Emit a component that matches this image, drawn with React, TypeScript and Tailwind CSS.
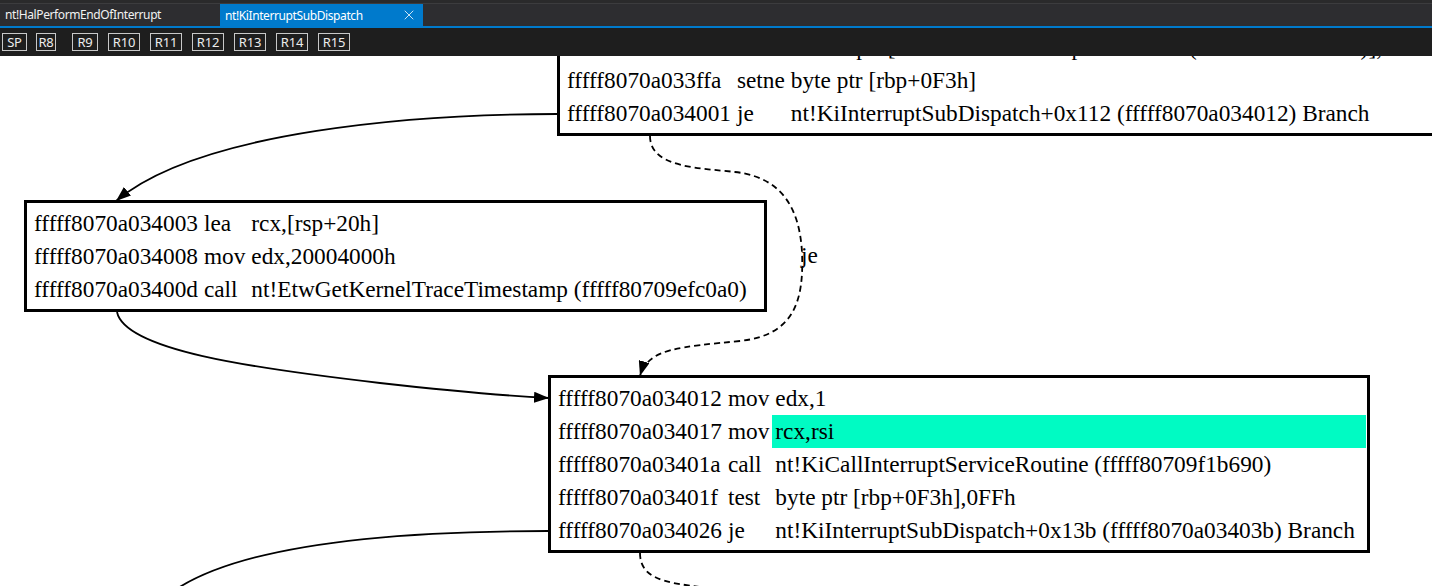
import { X } from "lucide-react";

type Row = { addr: string; op: string; args: string; hl?: boolean };

const regs = [
  { name: "SP", cls: "ml-[2px] w-[25px]" },
  { name: "R8", cls: "ml-[9px] w-[20px]" },
  { name: "R9", cls: "ml-[16px] w-[26px]" },
  { name: "R10", cls: "ml-[10px] w-[32px]" },
  { name: "R11", cls: "ml-[10px] w-[32px]" },
  { name: "R12", cls: "ml-[10px] w-[32px]" },
  { name: "R13", cls: "ml-[10px] w-[32px]" },
  { name: "R14", cls: "ml-[10px] w-[32px]" },
  { name: "R15", cls: "ml-[10px] w-[32px]" },
];

const block1: Row[] = [
  { addr: "fffff8070a033ff0", op: "test", args: "dword ptr [nt!PerfGlobalGroupMask+0x8 (fffff8070a8b5008)],40h" },
  { addr: "fffff8070a033ffa", op: "setne", args: "byte ptr [rbp+0F3h]" },
  { addr: "fffff8070a034001", op: "je", args: "nt!KiInterruptSubDispatch+0x112 (fffff8070a034012) Branch" },
];

const block2: Row[] = [
  { addr: "fffff8070a034003", op: "lea", args: "rcx,[rsp+20h]" },
  { addr: "fffff8070a034008", op: "mov", args: "edx,20004000h" },
  { addr: "fffff8070a03400d", op: "call", args: "nt!EtwGetKernelTraceTimestamp (fffff80709efc0a0)" },
];

const block3: Row[] = [
  { addr: "fffff8070a034012", op: "mov", args: "edx,1" },
  { addr: "fffff8070a034017", op: "mov", args: "rcx,rsi", hl: true },
  { addr: "fffff8070a03401a", op: "call", args: "nt!KiCallInterruptServiceRoutine (fffff80709f1b690)" },
  { addr: "fffff8070a03401f", op: "test", args: "byte ptr [rbp+0F3h],0FFh" },
  { addr: "fffff8070a034026", op: "je", args: "nt!KiInterruptSubDispatch+0x13b (fffff8070a03403b) Branch" },
];

function Block({ rows, className }: { rows: Row[]; className: string }) {
  return (
    <div className={`absolute border-[3px] border-black bg-white pt-[4px] pb-[3px] pl-[4px] pr-[1px] ${className}`}>
      <div className="grid grid-cols-[auto_auto_1fr] text-[23.3px] leading-[33px] text-black whitespace-nowrap">
        {rows.map((r) => (
          <div key={r.addr} className="contents">
            <div className="h-[33px] px-[3px]">{r.addr}</div>
            <div className="h-[33px] px-[3px]">{r.op}</div>
            <div className={`h-[33px] px-[3px] ${r.hl ? "bg-[#00fbc3]" : ""}`}>{r.args}</div>
          </div>
        ))}
      </div>
    </div>
  );
}

export default function App() {
  return (
    <div className="w-[1432px] h-[586px] overflow-hidden bg-white">
      {/* tab strip */}
      <div className="h-[4px] bg-[#2a2a2b] border-b border-[#3c3c3e]" />
      <div className="flex h-[22px] bg-[#2d2d30] text-[12px] tracking-[-0.4px] font-['Noto_Sans',sans-serif]">
        <div className="w-[220px] pl-[5px] leading-[21px] text-[#f1f1f1]">nt!HalPerformEndOfInterrupt</div>
        <div className="flex w-[203px] items-center justify-between bg-[#007acc] pl-[5px] pr-[6px] text-white">
          <span className="leading-[21px]">nt!KiInterruptSubDispatch</span>
          <X className="h-[16px] w-[16px]" strokeWidth={1.2} />
        </div>
      </div>
      <div className="h-[2px] bg-[#007acc]" />

      {/* register bar */}
      <div className="flex h-[28px] items-center bg-[#1e1e1e] font-['Noto_Sans',sans-serif] text-[13px] tracking-[-0.2px] text-[#ececec]">
        {regs.map((r) => (
          <div
            key={r.name}
            className={`flex h-[18px] items-center justify-center border border-[#c8c8c8] leading-none ${r.cls}`}
          >
            {r.name}
          </div>
        ))}
      </div>

      {/* graph canvas */}
      <div className="relative h-[530px] overflow-hidden bg-white font-['Liberation_Serif',serif]">
        <Block rows={block1} className="left-[557px] top-[-32px] w-[900px]" />
        <Block rows={block2} className="left-[24px] top-[144px] w-[743px]" />
        <Block rows={block3} className="left-[548px] top-[319px] w-[822px]" />

        <svg
          className="pointer-events-none absolute left-0 top-0"
          width="1432"
          height="530"
          viewBox="0 56 1432 530"
        >
          <defs>
            <marker
              id="ah"
              viewBox="0 0 15 11"
              refX="15"
              refY="5.5"
              markerWidth="15"
              markerHeight="11"
              markerUnits="userSpaceOnUse"
              orient="auto"
            >
              <path d="M0,0 L15,5.5 L0,11 z" fill="black" />
            </marker>
          </defs>
          <g fill="none" stroke="black" strokeWidth="1.8">
            <path d="M557,114 C420,114 200,130 116,201" markerEnd="url(#ah)" />
            <path
              d="M650,136 C650,168 700,168 735,172 C790,178 800,220 802,252 C804,300 795,335 740,341 C680,347 648,348 640,376"
              strokeDasharray="6,4"
              markerEnd="url(#ah)"
            />
            <path d="M117,312 C125,350 250,368 380,383 C460,392 510,396 549,398" markerEnd="url(#ah)" />
            <path d="M548,531 C420,531 250,540 175,590" />
            <path d="M640,553 C640,585 680,583 720,590" strokeDasharray="6,4" />
          </g>
        </svg>

        <div className="absolute left-[801px] top-[188px] text-[23.3px] leading-[23px] text-black">je</div>
      </div>
    </div>
  );
}
